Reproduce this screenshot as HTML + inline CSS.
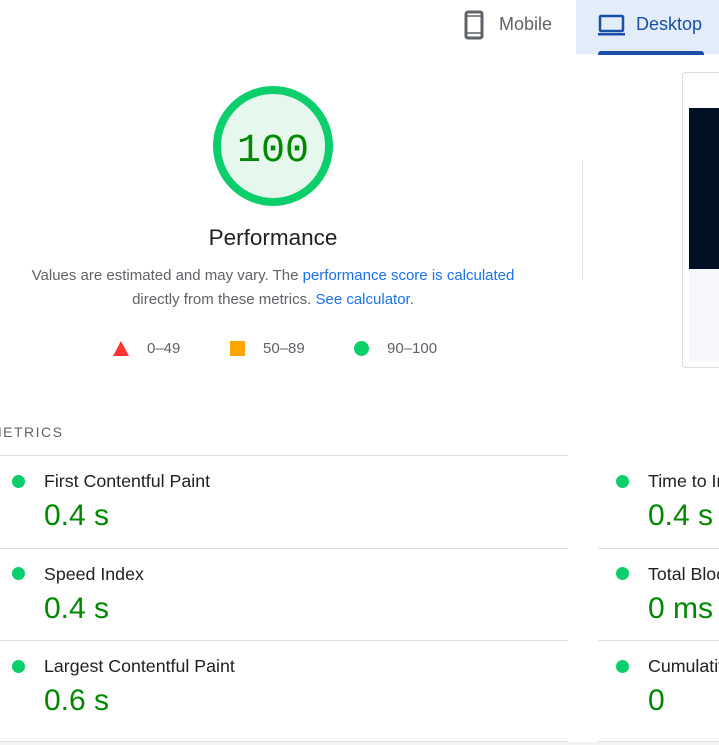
<!DOCTYPE html>
<html><head><meta charset="utf-8"><style>
*{margin:0;padding:0;box-sizing:border-box}
html,body{width:719px;height:745px;overflow:hidden;background:#fff;font-family:"Liberation Sans",Roboto,sans-serif}
#w{position:relative;width:719px;height:745px;overflow:hidden}
.a{position:absolute;white-space:nowrap}
.tab{font-size:18px;line-height:20px}
.hl{position:absolute;height:1px;background:#e0e0e0}
.dot{position:absolute;width:13px;height:13px;border-radius:50%;background:#0cce6b}
.lbl{position:absolute;font-size:17.8px;color:#212121;line-height:20px;white-space:nowrap}
.val{position:absolute;font-size:30px;color:#008800;line-height:32px;white-space:nowrap}
a{color:#1a73e8;text-decoration:none}
</style></head><body><div id="w">
<div class="a" style="left:576px;top:0;width:143px;height:54px;background:#e3edf9"></div>
<div class="a" style="left:598px;top:51px;width:106px;height:4px;background:#1a4fa8;border-radius:3px 3px 0 0"></div>
<svg class="a" style="left:464px;top:10px" width="21" height="30" viewBox="0 0 21 30"><rect x="2" y="2" width="16" height="26" rx="2" fill="none" stroke="#5f6368" stroke-width="3"/><rect x="2" y="6" width="16" height="17" fill="none" stroke="#5f6368" stroke-width="1.5"/></svg>
<div class="a tab" style="left:499px;top:14px;color:#5f6368">Mobile</div>
<svg class="a" style="left:597px;top:14px" width="29" height="23" viewBox="0 0 29 23"><rect x="3" y="2" width="23" height="15" rx="1" fill="none" stroke="#1a4fa8" stroke-width="2.5"/><rect x="1" y="19" width="27" height="2.5" fill="#1a4fa8"/></svg>
<div class="a tab" style="left:636px;top:14px;color:#1a4fa8">Desktop</div>
<svg class="a" style="left:212px;top:85px" width="122" height="122" viewBox="0 0 122 122"><circle cx="61" cy="61" r="56" fill="#e6f8ee" stroke="#0cce6b" stroke-width="8"/><text x="61" y="76" text-anchor="middle" font-family="Liberation Mono,monospace" font-size="40" fill="#008800">100</text></svg>
<div class="a" style="left:0;width:546px;top:225px;text-align:center;font-size:22.5px;color:#212121;line-height:26px">Performance</div>
<div class="a" style="left:0;width:546px;top:264px;text-align:center;font-size:15px;color:#5f6368;line-height:24px">Values are estimated and may vary. The <a>performance score is calculated</a><br>directly from these metrics. <a>See calculator</a>.</div>
<svg class="a" style="left:113px;top:341px" width="16" height="15"><polygon points="8,0 16,15 0,15" fill="#ff3333"/></svg>
<div class="a" style="left:147px;top:340px;font-size:15px;color:#5f6368">0–49</div>
<div class="a" style="left:230px;top:341px;width:15px;height:15px;background:#ffa400"></div>
<div class="a" style="left:263px;top:340px;font-size:15px;color:#5f6368">50–89</div>
<div class="a" style="left:354px;top:341px;width:15px;height:15px;border-radius:50%;background:#0cce6b"></div>
<div class="a" style="left:387px;top:340px;font-size:15px;color:#5f6368">90–100</div>
<div class="a" style="left:582px;top:160px;width:1px;height:120px;background:#e0e0e0"></div>
<div class="a" style="left:682px;top:72px;width:50px;height:296px;border:1px solid #dcdcdc;border-radius:4px"></div>
<div class="a" style="left:689px;top:108px;width:30px;height:161px;background:#011025"></div>
<div class="a" style="left:689px;top:269px;width:30px;height:92px;background:#f5f7fa"></div>
<div class="a" style="left:-10px;top:424px;font-size:14px;letter-spacing:1.5px;color:#5f6368">METRICS</div>
<div class="hl" style="left:0;top:455px;width:568px"></div>
<div class="hl" style="left:0;top:548px;width:568px"></div>
<div class="hl" style="left:0;top:640px;width:568px"></div>
<div class="hl" style="left:0;top:741px;width:568px"></div>
<div class="hl" style="left:598px;top:548px;width:121px"></div>
<div class="hl" style="left:598px;top:640px;width:121px"></div>
<div class="hl" style="left:598px;top:741px;width:121px"></div>
<div class="a" style="left:0;top:742px;width:719px;height:3px;background:#f3f3f3"></div>
<div class="dot" style="left:12px;top:475px"></div><div class="lbl" style="left:44px;top:471px">First Contentful Paint</div><div class="val" style="left:44px;top:500px">0.4 s</div>
<div class="dot" style="left:12px;top:567px"></div><div class="lbl" style="left:44px;top:564px">Speed Index</div><div class="val" style="left:44px;top:593px">0.4 s</div>
<div class="dot" style="left:12px;top:660px"></div><div class="lbl" style="left:44px;top:656px">Largest Contentful Paint</div><div class="val" style="left:44px;top:685px">0.6 s</div>
<div class="dot" style="left:616px;top:475px"></div><div class="lbl" style="left:648px;top:471px">Time to Interactive</div><div class="val" style="left:648px;top:500px">0.4 s</div>
<div class="dot" style="left:616px;top:567px"></div><div class="lbl" style="left:648px;top:564px">Total Blocking Time</div><div class="val" style="left:648px;top:593px">0 ms</div>
<div class="dot" style="left:616px;top:660px"></div><div class="lbl" style="left:648px;top:656px">Cumulative Layout Shift</div><div class="val" style="left:648px;top:685px">0</div>
</div></body></html>
